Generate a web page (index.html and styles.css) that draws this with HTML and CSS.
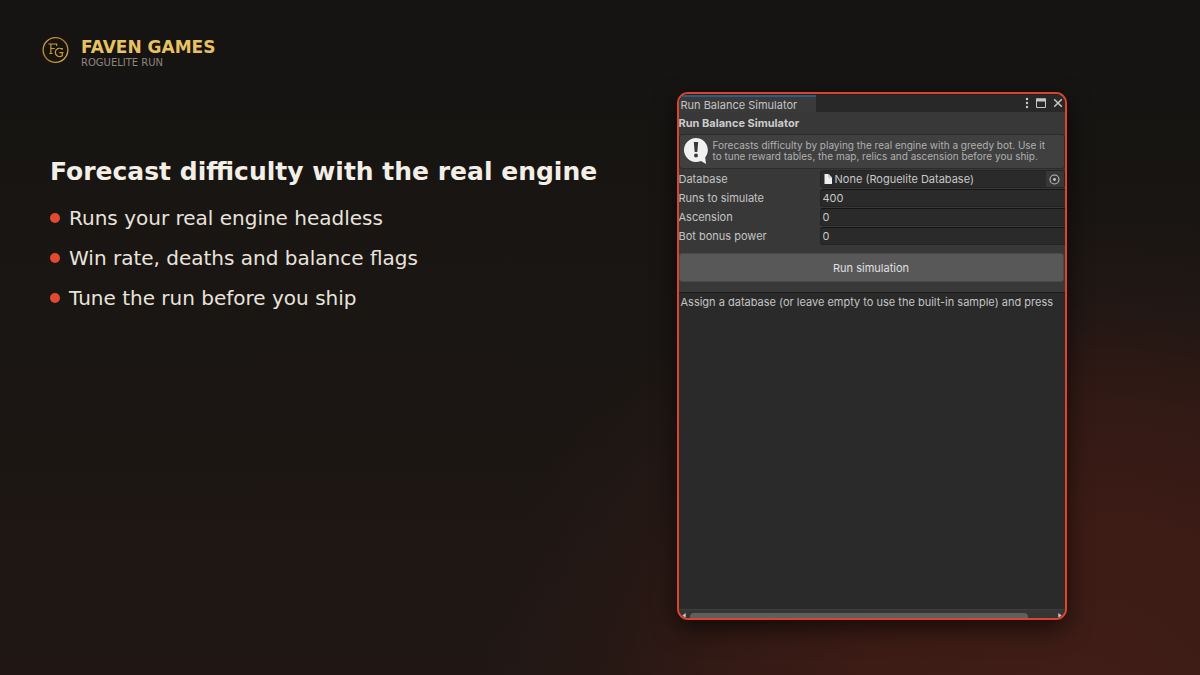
FILE: index.html
```html
<!DOCTYPE html>
<html lang="en">
<head>
<meta charset="utf-8">
<meta name="viewport" content="width=device-width, initial-scale=1">
<title>Faven Games</title>
<link rel="stylesheet" href="styles.css">
</head>
<body class="page">
<header class="brand">
  <svg class="brand-logo" viewBox="0 0 28 28" aria-hidden="true">
    <defs><linearGradient id="gold" x1="0" y1="0" x2="1" y2="1"><stop offset="0" stop-color="#d9ab48"/><stop offset=".5" stop-color="#a8782a"/><stop offset="1" stop-color="#e0b654"/></linearGradient></defs>
    <circle cx="14" cy="14" r="12.8" fill="#17130d" stroke="url(#gold)" stroke-width="1.4"/>
    <g fill="none" stroke="#c89a42" stroke-width="1.2">
      <path d="M6.6 7.8h8.6v2M9.2 7.8v9.8M7.6 17.6h3.2M9.2 12.4h4"/>
      <path d="M21 13.8v-2M21 13.2c-3-2.2-7.2-.6-7.2 3.2 0 4.2 4.6 5.4 7.2 3.6v-3.2h-3M20.6 16.8h1.6"/>
    </g>
  </svg>
  <div class="brand-text">
    <p class="brand-name">FAVEN GAMES</p>
    <p class="brand-product">ROGUELITE RUN</p>
  </div>
</header>
<main class="content">
  <section class="pitch">
    <h1 class="headline">Forecast difficulty with the real engine</h1>
    <ul class="points">
      <li class="point">Runs your real engine headless</li>
      <li class="point">Win rate, deaths and balance flags</li>
      <li class="point">Tune the run before you ship</li>
    </ul>
  </section>
  <section class="stage">
    <div class="window">
      <div class="tabbar">
        <span class="tab">Run Balance Simulator</span>
        <div class="window-actions">
          <button class="icon-button" type="button" aria-label="Menu"><svg width="4" height="12" viewBox="0 0 4 12" fill="#c8c8c8"><circle cx="2" cy="2" r="1.2"/><circle cx="2" cy="6" r="1.2"/><circle cx="2" cy="10" r="1.2"/></svg></button>
          <button class="icon-button" type="button" aria-label="Maximize"><svg width="10" height="10" viewBox="0 0 10 10"><path d="M.5 1h9v8.5h-9z" fill="none" stroke="#c8c8c8"/><path d="M0 .5h10v3H0z" fill="#c8c8c8"/></svg></button>
          <button class="icon-button" type="button" aria-label="Close"><svg width="10" height="10" viewBox="0 0 10 10"><path d="M1.2 1.2l7.6 7.6M8.8 1.2L1.2 8.8" stroke="#c8c8c8" stroke-width="1.5"/></svg></button>
        </div>
      </div>
      <h2 class="window-title">Run Balance Simulator</h2>
      <div class="help">
        <svg class="help-icon" viewBox="0 0 26 28" aria-hidden="true"><path d="M13 1a12 12 0 1 0 5 22.9L23 27l-.8-6.6A12 12 0 0 0 13 1z" fill="#f0f0f0"/><path d="M10.8 5h4.4l-.9 10h-2.6z" fill="#363636"/><circle cx="13" cy="18.5" r="1.9" fill="#363636"/></svg>
        <p class="help-text">Forecasts difficulty by playing the real engine with a greedy bot. Use it to tune reward tables, the map, relics and ascension before you ship.</p>
      </div>
      <form class="fields">
        <label class="label" for="database">Database</label>
        <div class="object-field">
          <svg class="file-icon" width="8" height="10" viewBox="0 0 8 10" aria-hidden="true"><path d="M.5 0h4L8 3.5V10H.5z" fill="#eee"/><path d="M4.8 0v3.2H8" fill="none" stroke="#999" stroke-width=".6"/></svg>
          <input class="input input-object" id="database" value="None (Roguelite Database)" readonly>
          <button class="picker" type="button" aria-label="Select database"><svg width="11" height="11" viewBox="0 0 11 11"><circle cx="5.5" cy="5.5" r="4.5" fill="none" stroke="#bdbdbd" stroke-width="1.1"/><circle cx="5.5" cy="5.5" r="1.4" fill="#c8c8c8"/></svg></button>
        </div>
        <label class="label" for="runs">Runs to simulate</label>
        <input class="input" id="runs" value="400">
        <label class="label" for="ascension">Ascension</label>
        <input class="input" id="ascension" value="0">
        <label class="label" for="power">Bot bonus power</label>
        <input class="input" id="power" value="0">
        <button class="run" type="button">Run simulation</button>
      </form>
      <div class="output">Assign a database (or leave empty to use the built-in sample) and press</div>
      <div class="scrollbar">
        <svg class="arrow" viewBox="0 0 4 6"><path d="M4 0v6L0 3z" fill="#c8c8c8"/></svg>
        <div class="track"><div class="thumb"></div></div>
        <svg class="arrow" viewBox="0 0 4 6"><path d="M0 0v6l4-3z" fill="#c8c8c8"/></svg>
      </div>
    </div>
  </section>
</main>
</body>
</html>
```
FILE: styles.css
```css
* { box-sizing: border-box; }

.page {
  margin: 0;
  min-height: 100vh;
  display: flex;
  flex-direction: column;
  padding: 36px 57px 55px 42px;
  font-family: "DejaVu Sans", sans-serif;
  color: #f3eee6;
  background:
    radial-gradient(ellipse 50% 74% at 90% 104%, rgba(64, 29, 23, 1) 0%, rgba(62, 28, 22, 0.98) 35%, rgba(60, 27, 21, 0.7) 60%, rgba(56, 27, 21, 0.25) 80%, rgba(50, 25, 20, 0) 100%),
    linear-gradient(#151412, #1a1613 50%, #201714);
}

.brand { display: flex; gap: 12px; height: 56px; align-items: flex-start; }
.brand-logo { width: 27px; height: 28px; }
.brand-text { padding-top: 1px; }
.brand-name, .brand-product { margin: 0; }
.brand-name { font-size: 17px; line-height: 20px; font-weight: bold; color: #e8c163; }
.brand-product { font-size: 10px; line-height: 12px; color: #8f867c; }

.content { flex: 1; display: grid; grid-template-columns: 558px 1fr; }
.pitch { padding: 63px 0 0 8px; }
.headline { margin: 0 0 9px; font-size: 25px; line-height: 34px; white-space: nowrap; }
.points { margin: 0; padding: 0; list-style: none; }
.point { display: flex; align-items: center; gap: 9px; font-size: 20px; line-height: 40px; color: #e9e3dc; }
.point::before { content: ""; width: 10px; height: 10px; border-radius: 50%; background: #e14a2f; }

.stage { display: flex; justify-content: center; }
.window {
  width: 100%;
  max-width: 390px;
  display: flex;
  flex-direction: column;
  overflow: hidden;
  border: 2px solid #dc452b;
  border-radius: 11px;
  background: #383838;
  box-shadow: 0 9px 24px rgba(0, 0, 0, 0.6);
  font-family: Inter, sans-serif;
  font-size: 11px;
  color: #c4c4c4;
}

.tabbar { display: flex; justify-content: space-between; height: 18px; background: #282828; border-top: 1px solid #202020; }
.tab { width: 137px; padding-left: 2px; line-height: 16px; background: #3a3a3a; border-top: 2px solid #2c5d87; }
.window-actions { display: flex; align-items: center; gap: 7px; padding: 0 2px 2px 0; }
.icon-button { display: flex; padding: 0; border: 0; background: none; }
.window-title { margin: 0; font-size: 11px; line-height: 22px; color: #cccccc; }

.help { display: flex; align-items: center; gap: 4px; height: 35px; padding: 0 12px 2px 3px; background: #404040; border: 1px solid #2c2c2c; border-radius: 3px; }
.help-icon { width: 26px; height: 28px; flex: none; }
.help-text { margin: 0; font-size: 10px; line-height: 11px; color: #b0b0b0; }

.fields { display: grid; grid-template-columns: 141px 1fr; row-gap: 1px; padding: 1px 0 9px; }
.label { line-height: 18px; }
.input { width: 100%; min-width: 0; height: 18px; padding: 0 2px; border: 1px solid #242424; border-top-color: #151515; border-right: 0; border-radius: 3px 0 0 3px; background: #2a2a2a; color: #c8c8c8; font: inherit; }
.object-field { display: flex; align-items: center; height: 18px; padding-left: 3px; gap: 3px; border: 1px solid #242424; border-radius: 3px; background: #2a2a2a; }
.file-icon { flex: none; }
.input-object { height: 16px; padding: 0; border: 0; }
.picker { display: flex; align-items: center; justify-content: center; flex: none; width: 18px; height: 16px; padding: 0; border: 0; background: #373737; }
.run { grid-column: 1 / -1; height: 29px; margin: 7px 1px 1px 0; border: 1px solid #4a4a4a; border-radius: 3px; background: #585858; color: #e0e0e0; font: inherit; }

.output { flex: 1; padding: 1px 0 0 2px; border-top: 1px solid #1c1c1c; background: #2a2a2a; line-height: 16px; white-space: nowrap; overflow: hidden; }
.scrollbar { display: flex; align-items: flex-end; gap: 4px; height: 9px; padding: 0 3px; border-top: 1px solid #3d3d3d; background: #353535; }
.arrow { width: 4px; height: 5px; flex: none; }
.track { flex: 1; }
.thumb { width: 93%; height: 5px; border-radius: 4px 4px 0 0; background: #5f5f5f; }
```
